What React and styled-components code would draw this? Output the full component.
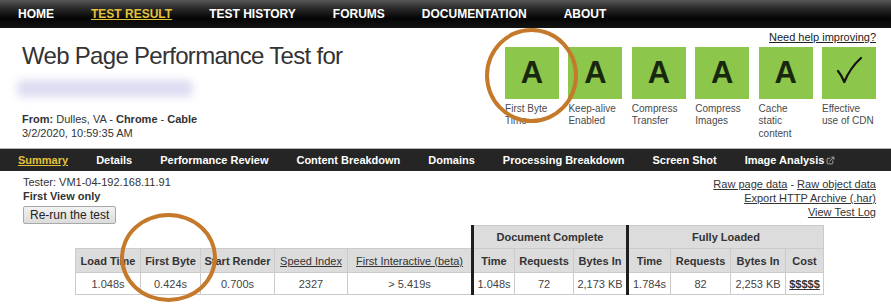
import React from 'react';
import styled, { createGlobalStyle } from 'styled-components';
import { ExternalLink } from 'lucide-react';

const GlobalStyle = createGlobalStyle`
  body {
    margin: 0;
    background: #fff;
    font-family: "Liberation Sans", Arial, sans-serif;
    color: #333;
  }
`;

const Page = styled.div`
  position: relative;
  width: 891px;
  height: 308px;
  overflow: hidden;
  background: #fff;
`;

const TopNav = styled.nav`
  display: flex;
  gap: 37px;
  height: 28px;
  padding-left: 18px;
  background: linear-gradient(to bottom, #575757 0%, #2a2a2a 30%, #050505 65%, #141414 100%);
`;

const TopLink = styled.a`
  font-size: 12px;
  font-weight: bold;
  line-height: 28px;
  color: ${p => (p.active ? '#e3c23a' : '#fff')};
  text-decoration: ${p => (p.active ? 'underline' : 'none')};
  white-space: nowrap;
`;

const Header = styled.header`
  display: flex;
  justify-content: space-between;
  height: 120px;
  border-bottom: 1px solid #b4b4b4;
`;

const Intro = styled.div`
  padding: 14px 0 0 22px;
`;

const Title = styled.h1`
  margin: 0;
  font-size: 24px;
  line-height: 28px;
  font-weight: normal;
  letter-spacing: -0.7px;
  color: #333;
`;

const BlurredUrl = styled.div`
  width: 176px;
  height: 17px;
  margin: 10px 0 0 -5px;
  background: #dcdcf2;
  border-radius: 6px;
  filter: blur(4px);
`;

const TestInfo = styled.div`
  margin-top: 15px;
  font-size: 11px;
  line-height: 14px;
  color: #333;
`;

const Grades = styled.div`
  display: flex;
  flex-direction: column;
  align-items: flex-end;
  padding: 2px 15px 0 0;
`;

const HelpLink = styled.a`
  font-size: 11px;
  line-height: 14px;
  color: #222;
  text-decoration: underline;
`;

const GradeRow = styled.div`
  display: flex;
  gap: 9.4px;
  margin-top: 3px;
`;

const Grade = styled.div`
  width: 54px;
`;

const GradeBox = styled.div`
  display: flex;
  align-items: center;
  justify-content: center;
  width: 54px;
  height: 52px;
  background: #8cc64a;
  font-size: 31px;
  font-weight: bold;
  color: #18280f;
`;

const GradeLabel = styled.div`
  margin-top: 4px;
  font-size: 10px;
  line-height: 12.3px;
  color: #4a4a4a;
`;

const SubNav = styled.nav`
  display: flex;
  gap: 28px;
  height: 22px;
  padding-left: 18px;
  background: #252525;
`;

const SubLink = styled.a`
  display: flex;
  align-items: center;
  gap: 2px;
  font-size: 11px;
  font-weight: bold;
  line-height: 22px;
  color: ${p => (p.active ? '#e3c23a' : '#fff')};
  text-decoration: ${p => (p.active ? 'underline' : 'none')};
  white-space: nowrap;
`;

const InfoRow = styled.div`
  display: flex;
  justify-content: space-between;
  padding: 4px 15px 0 23px;
`;

const Tester = styled.div`
  font-size: 11px;
  line-height: 14px;
  color: #333;
`;

const RerunButton = styled.button`
  display: block;
  height: 18px;
  margin-top: 3px;
  padding: 0 6px;
  font-family: inherit;
  font-size: 12px;
  color: #222;
  background: linear-gradient(#f2f2f2, #dcdcdc);
  border: 1px solid #a8a8a8;
  border-radius: 2px;
`;

const RawLinks = styled.div`
  padding-top: 2px;
  text-align: right;
  font-size: 11px;
  line-height: 14px;
  color: #444;
`;

const TextLink = styled.a`
  color: #333;
  text-decoration: underline;
  font-weight: ${p => (p.bold ? 'bold' : 'normal')};
`;

const Results = styled.table`
  width: 748px;
  margin: 1px 0 0 75px;
  border-collapse: collapse;
  table-layout: fixed;
  font-size: 11px;
`;

const Cell = styled.td`
  height: ${p => p.h || 21}px;
  padding: 0;
  text-align: center;
  white-space: nowrap;
  color: #444;
  border: 1px solid #cbcbcb;
  border-left: ${p => (p.split ? '3px solid #1e1e1e' : '1px solid #cbcbcb')};
  background: ${p => (p.head ? '#dcdcdc' : '#fff')};
  font-weight: ${p => (p.head ? 'bold' : 'normal')};
  ${p => p.head && 'color: #333;'}
`;

const EmptyCell = styled.td`
  border: none;
  padding: 0;
`;

const Circle = styled.div`
  position: absolute;
  left: ${p => p.x}px;
  top: ${p => p.y}px;
  width: ${p => p.w}px;
  height: ${p => p.h}px;
  box-sizing: border-box;
  border: 4px solid #c47a2a;
  border-radius: 50%;
  pointer-events: none;
`;

const topLinks = ['HOME', 'TEST RESULT', 'TEST HISTORY', 'FORUMS', 'DOCUMENTATION', 'ABOUT'];
const subLinks = [
  'Summary', 'Details', 'Performance Review', 'Content Breakdown',
  'Domains', 'Processing Breakdown', 'Screen Shot',
];

const grades = [
  { grade: 'A', label: 'First Byte Time' },
  { grade: 'A', label: 'Keep-alive Enabled' },
  { grade: 'A', label: 'Compress Transfer' },
  { grade: 'A', label: 'Compress Images' },
  { grade: 'A', label: 'Cache static content' },
  { grade: 'check', label: 'Effective use of CDN' },
];

const Check = () => (
  <svg width="54" height="52" viewBox="0 0 54 52">
    <path d="M16 24 Q19.5 28 22.3 35 Q28 21 39 11" fill="none" stroke="#151515" strokeWidth="2.3" strokeLinecap="round" strokeLinejoin="round" />
  </svg>
);

export default function App() {
  return (
    <Page>
      <GlobalStyle />
      <TopNav>
        {topLinks.map(l => (
          <TopLink key={l} active={l === 'TEST RESULT'}>{l}</TopLink>
        ))}
      </TopNav>

      <Header>
        <Intro>
          <Title>Web Page Performance Test for</Title>
          <BlurredUrl />
          <TestInfo>
            <b>From:</b> Dulles, VA - <b>Chrome</b> - <b>Cable</b>
            <br />
            3/2/2020, 10:59:35 AM
          </TestInfo>
        </Intro>
        <Grades>
          <HelpLink>Need help improving?</HelpLink>
          <GradeRow>
            {grades.map(g => (
              <Grade key={g.label}>
                <GradeBox>{g.grade === 'check' ? <Check /> : g.grade}</GradeBox>
                <GradeLabel>{g.label}</GradeLabel>
              </Grade>
            ))}
          </GradeRow>
        </Grades>
      </Header>

      <SubNav>
        {subLinks.map(l => (
          <SubLink key={l} active={l === 'Summary'}>{l}</SubLink>
        ))}
        <SubLink>
          Image Analysis <ExternalLink size={9} strokeWidth={2.2} color="#bbb" />
        </SubLink>
      </SubNav>

      <InfoRow>
        <Tester>
          Tester: VM1-04-192.168.11.91
          <br />
          <b>First View only</b>
          <RerunButton>Re-run the test</RerunButton>
        </Tester>
        <RawLinks>
          <TextLink>Raw page data</TextLink> - <TextLink>Raw object data</TextLink>
          <br />
          <TextLink>Export HTTP Archive (.har)</TextLink>
          <br />
          <TextLink>View Test Log</TextLink>
        </RawLinks>
      </InfoRow>

      <Results>
        <colgroup>
          <col style={{ width: 65 }} />
          <col style={{ width: 60 }} />
          <col style={{ width: 74 }} />
          <col style={{ width: 73 }} />
          <col style={{ width: 125 }} />
          <col style={{ width: 42 }} />
          <col style={{ width: 59 }} />
          <col style={{ width: 54 }} />
          <col style={{ width: 43 }} />
          <col style={{ width: 60 }} />
          <col style={{ width: 55 }} />
          <col style={{ width: 38 }} />
        </colgroup>
        <tbody>
          <tr>
            <EmptyCell colSpan={5} />
            <Cell head split colSpan={3} h={22}>Document Complete</Cell>
            <Cell head split colSpan={4} h={22}>Fully Loaded</Cell>
          </tr>
          <tr>
            <Cell head h={23}>Load Time</Cell>
            <Cell head h={23}>First Byte</Cell>
            <Cell head h={23}>Start Render</Cell>
            <Cell head h={23}><TextLink>Speed Index</TextLink></Cell>
            <Cell head h={23}><TextLink>First Interactive (beta)</TextLink></Cell>
            <Cell head split h={23}>Time</Cell>
            <Cell head h={23}>Requests</Cell>
            <Cell head h={23}>Bytes In</Cell>
            <Cell head split h={23}>Time</Cell>
            <Cell head h={23}>Requests</Cell>
            <Cell head h={23}>Bytes In</Cell>
            <Cell head h={23}>Cost</Cell>
          </tr>
          <tr>
            <Cell>1.048s</Cell>
            <Cell>0.424s</Cell>
            <Cell>0.700s</Cell>
            <Cell>2327</Cell>
            <Cell>&gt; 5.419s</Cell>
            <Cell split>1.048s</Cell>
            <Cell>72</Cell>
            <Cell>2,173 KB</Cell>
            <Cell split>1.784s</Cell>
            <Cell>82</Cell>
            <Cell>2,253 KB</Cell>
            <Cell><TextLink bold>$$$$$</TextLink></Cell>
          </tr>
        </tbody>
      </Results>

      <Circle x={485} y={28} w={93} h={95} />
      <Circle x={120} y={213} w={97} h={89} />
    </Page>
  );
}
